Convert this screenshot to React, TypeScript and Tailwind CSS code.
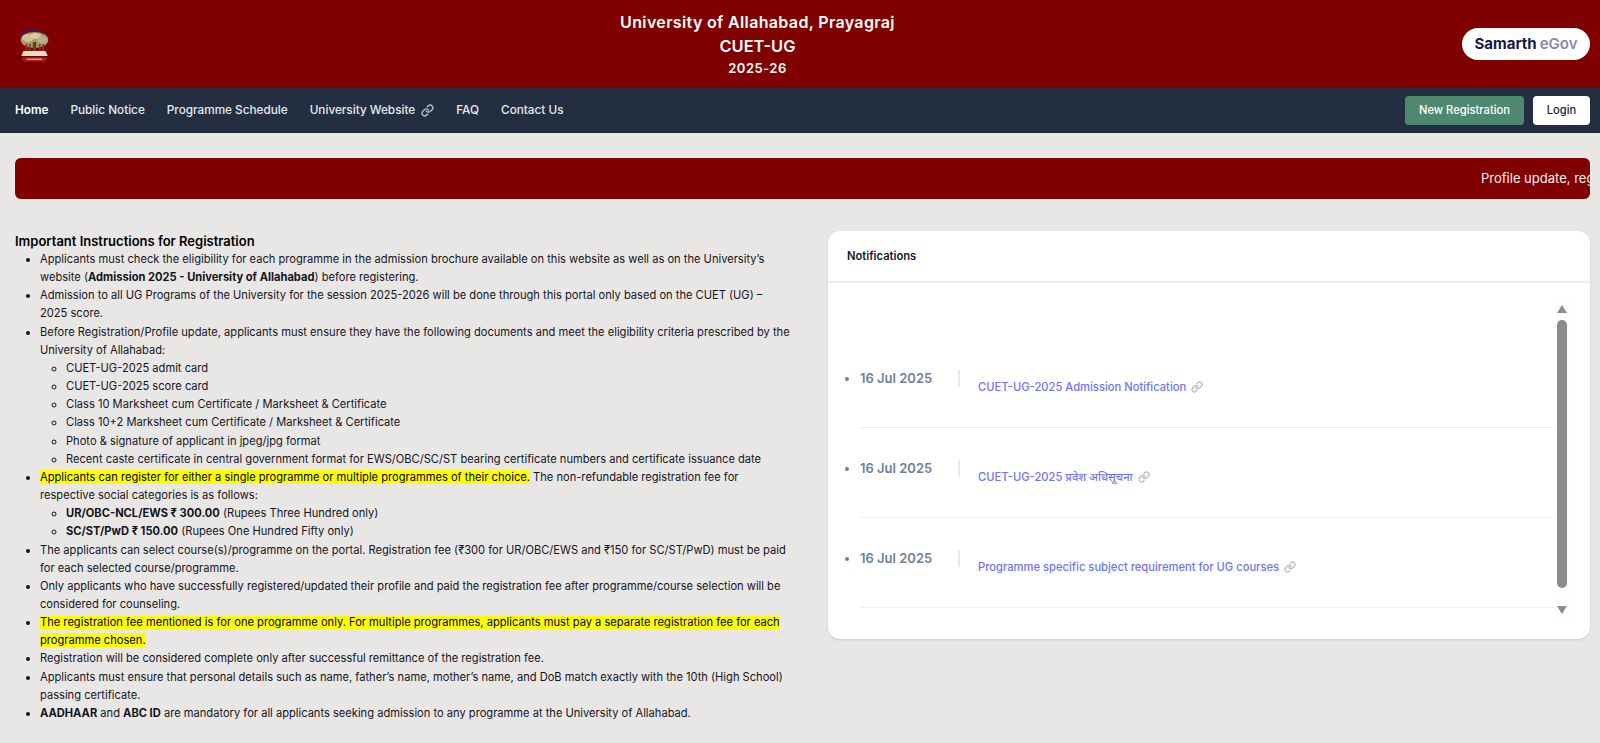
import { Link } from 'lucide-react'

const navItems = ['Public Notice', 'Programme Schedule']

const notifications = [
  'CUET-UG-2025 Admission Notification',
  'CUET-UG-2025 प्रवेश अधिसूचना',
  'Programme specific subject requirement for UG courses',
]

function Emblem() {
  return (
    <svg width="31" height="35" viewBox="0 0 28 35" preserveAspectRatio="none" className="shrink-0" aria-hidden="true">
      <path d="M1 9 Q14 -3 27 9" fill="none" stroke="#3f1a66" strokeWidth="1.8" strokeDasharray="2.5 1" />
      <ellipse cx="14" cy="13" rx="12.5" ry="8" fill="#a8966c" />
      <ellipse cx="8" cy="11" rx="5" ry="4" fill="#cfc19a" />
      <ellipse cx="15" cy="9" rx="5" ry="3" fill="#d8cca8" />
      <ellipse cx="21" cy="13" rx="4.5" ry="3.5" fill="#bcae86" />
      <rect x="12.5" y="15" width="3" height="9" fill="#5e3f24" />
      <rect x="6" y="17" width="1.5" height="7" fill="#7a3b2a" />
      <rect x="9" y="17" width="1.5" height="7" fill="#7a3b2a" />
      <rect x="18" y="17" width="1.5" height="7" fill="#7a3b2a" />
      <rect x="21" y="17" width="1.5" height="7" fill="#7a3b2a" />
      <path d="M4 24 H24 L26 29 H2 Z" fill="#e6dcc8" />
      <path d="M2 30 H26 L24 35 H4 Z" fill="#a81c1c" stroke="#5a0808" strokeWidth="0.6" />
      <rect x="7" y="31.5" width="14" height="1.4" fill="#d9a58c" />
    </svg>
  )
}

function Instructions() {
  return (
    <div className="text-[11.13px] leading-[18.15px] text-[#14141c]">
      <h1 className="text-[13px] leading-[18px] font-semibold text-black">Important Instructions for Registration</h1>
      <ul className="list-disc pl-[25px]">
        <li>
          Applicants must check the eligibility for each programme in the admission brochure available on this website as well as on the University’s website (<b>Admission 2025 - University of Allahabad</b>) before registering.
        </li>
        <li>Admission to all UG Programs of the University for the session 2025-2026 will be done through this portal only based on the CUET (UG) – 2025 score.</li>
        <li>
          Before Registration/Profile update, applicants must ensure they have the following documents and meet the eligibility criteria prescribed by the University of Allahabad:
          <ul className="list-[circle] pl-[26px]">
            <li>CUET-UG-2025 admit card</li>
            <li>CUET-UG-2025 score card</li>
            <li>Class 10 Marksheet cum Certificate / Marksheet &amp; Certificate</li>
            <li>Class 10+2 Marksheet cum Certificate / Marksheet &amp; Certificate</li>
            <li>Photo &amp; signature of applicant in jpeg/jpg format</li>
            <li>Recent caste certificate in central government format for EWS/OBC/SC/ST bearing certificate numbers and certificate issuance date</li>
          </ul>
        </li>
        <li>
          <mark className="bg-[#ffff00]">Applicants can register for either a single programme or multiple programmes of their choice.</mark> The non-refundable registration fee for respective social categories is as follows:
          <ul className="list-[circle] pl-[26px]">
            <li><b>UR/OBC-NCL/EWS ₹ 300.00</b> (Rupees Three Hundred only)</li>
            <li><b>SC/ST/PwD ₹ 150.00</b> (Rupees One Hundred Fifty only)</li>
          </ul>
        </li>
        <li>The applicants can select course(s)/programme on the portal. Registration fee (₹300 for UR/OBC/EWS and ₹150 for SC/ST/PwD) must be paid for each selected course/programme.</li>
        <li>Only applicants who have successfully registered/updated their profile and paid the registration fee after programme/course selection will be considered for counseling.</li>
        <li>
          <mark className="bg-[#ffff00]">The registration fee mentioned is for one programme only. For multiple programmes, applicants must pay a separate registration fee for each programme chosen.</mark>
        </li>
        <li>Registration will be considered complete only after successful remittance of the registration fee.</li>
        <li>Applicants must ensure that personal details such as name, father’s name, mother’s name, and DoB match exactly with the 10th (High School) passing certificate.</li>
        <li><b>AADHAAR</b> and <b>ABC ID</b> are mandatory for all applicants seeking admission to any programme at the University of Allahabad.</li>
      </ul>
    </div>
  )
}

function Notifications() {
  return (
    <div className="w-[762px] h-[408px] shrink-0 rounded-xl bg-white shadow-sm flex flex-col">
      <div className="h-[52px] shrink-0 border-b-2 border-[#eceef3] flex items-center px-[19px] text-[11.2px] font-semibold text-[#14172e]">
        Notifications
      </div>
      <div className="flex flex-1 pl-[18px] pr-[20px] pt-[19px]">
        <ul className="flex-1 list-disc pl-[14px] pt-[36px] text-[#6f7f95] flex flex-col marker:text-[12px]">
          {notifications.map((text) => (
            <li key={text} className="h-[90px] border-b border-[#f1f1f3] pt-[30px]">
              <div className="flex">
                <span className="w-[98px] shrink-0 text-[13px] leading-[20px] font-semibold">16 Jul 2025</span>
                <span className="w-[20px] shrink-0 h-[17px] mt-[2px] border-l-2 border-[#e6e8f4]" />
                <a className="flex items-center gap-[5px] mt-[11px] text-[11.2px] leading-[16px] font-medium text-[#7074f7]" href="#">
                  {text}
                  <Link size={12} strokeWidth={2.6} className="text-[#bdb8c8]" />
                </a>
              </div>
            </li>
          ))}
        </ul>
        <div className="w-[16px] h-[320px] shrink-0 -mt-[1px] bg-[#fdfdfd] flex flex-col items-center">
          <svg width="10" height="8" viewBox="0 0 10 8" className="mt-[4px]" aria-hidden="true">
            <path d="M5 0 L10 8 H0 Z" fill="#8c8c8c" />
          </svg>
          <div className="w-[10px] h-[268px] mt-[7px] rounded-[5px] bg-[#8c8c8c]" />
          <svg width="10" height="8" viewBox="0 0 10 8" className="mt-[18px]" aria-hidden="true">
            <path d="M5 8 L10 0 H0 Z" fill="#8c8c8c" />
          </svg>
        </div>
      </div>
    </div>
  )
}

export default function App() {
  return (
    <div className="h-[743px] overflow-hidden bg-[#e9e7e6] font-['Inter','Noto_Sans','Noto_Sans_CJK_SC',sans-serif]">
      <header className="h-[88px] bg-[#800000] flex items-center pl-[19px] pr-[10px]">
        <Emblem />
        <div className="flex-1 pl-[3px] text-center text-white font-semibold">
          <div className="text-[16px] leading-[22px] mb-[1px] tracking-[0.35px]">University of Allahabad, Prayagraj</div>
          <div className="text-[16.4px] leading-[24px]">CUET-UG</div>
          <div className="text-[13px] leading-[20px] tracking-[0.5px]">2025-26</div>
        </div>
        <div className="w-[128px] h-[32px] shrink-0 rounded-full bg-white flex items-center justify-center gap-[3px] text-[15px] font-bold">
          <span className="text-[#14194f]">Samarth</span>
          <span className="text-[#878aa6] font-semibold">eGov</span>
        </div>
      </header>

      <nav className="h-[45px] bg-[#232f40] flex items-center justify-between pl-[15px] pr-[10px] text-[11.75px] font-medium text-[#e8eaee]">
        <div className="flex items-center gap-[22px]">
          <a href="#" className="text-white font-semibold">Home</a>
          {navItems.map((item) => (
            <a key={item} href="#">{item}</a>
          ))}
          <a href="#" className="flex items-center gap-[6px]">
            University Website
            <Link size={13} strokeWidth={2.6} className="text-[#b9bcc6]" />
          </a>
          <a href="#">FAQ</a>
          <a href="#">Contact Us</a>
        </div>
        <div className="flex items-center gap-[9px] text-[11.2px]">
          <button className="w-[119px] h-[29px] rounded-[4px] bg-[#4f8870] text-white">New Registration</button>
          <button className="w-[57px] h-[29px] rounded-[4px] bg-white text-[#1c2636]">Login</button>
        </div>
      </nav>

      <div className="pl-[14px] pr-[9px] pt-[24px]">
        <div className="h-[43px] rounded-[7px] border border-[#f3f1f0] bg-[#800000] flex items-center overflow-hidden whitespace-nowrap pl-[1466px] text-[13px] text-[#fbf3f3]">
          Profile update, registration and programme selection are open
        </div>
      </div>

      <main className="flex items-start justify-between pl-[15px] pr-[10px] pt-[31px]">
        <div className="w-[776px] pt-[1px]">
          <Instructions />
        </div>
        <Notifications />
      </main>
    </div>
  )
}
